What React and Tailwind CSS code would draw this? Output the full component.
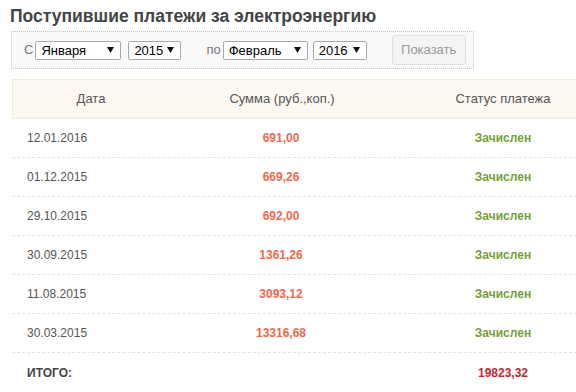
import React from 'react';

const payments = [
    { date: '12.01.2016', sum: '691,00' },
    { date: '01.12.2015', sum: '669,26' },
    { date: '29.10.2015', sum: '692,00' },
    { date: '30.09.2015', sum: '1361,26' },
    { date: '11.08.2015', sum: '3093,12' },
    { date: '30.03.2015', sum: '13316,68' },
];

const FakeSelect = ({ value, width }) => (
    <div className={`h-[19px] ${width} bg-white border border-[#a9a9a9] rounded-[2px] flex items-center justify-between pl-[5px] pr-[6px] text-[13px] text-black leading-none`}>
        <span>{value}</span>
        <svg width="7" height="6" viewBox="0 0 7 6"><path d="M0 0h7L3.5 6z" fill="#111" /></svg>
    </div>
);

export default function App() {
    return (
        <div className="w-[576px] h-[392px] overflow-hidden bg-white font-['Liberation_Sans',Arial,sans-serif]">
            <h1 className="pl-[10px] pt-[6px] text-[17.5px] leading-[20px] font-bold text-[#444]">
                Поступившие платежи за электроэнергию
            </h1>

            {/* Filter */}
            <div className="ml-[11px] mt-[5px] w-[463px] h-[38px] border border-dotted border-[#c8c8c8] bg-[#f9f9f9] flex items-center pl-[12px]">
                <span className="text-[13px] text-[#777] mr-[2px]">С</span>
                <FakeSelect value="Января" width="w-[86px]" />
                <div className="w-[7px]" />
                <FakeSelect value="2015" width="w-[53px]" />
                <span className="text-[13px] text-[#777] ml-[25px] mr-[2px]">по</span>
                <FakeSelect value="Февраль" width="w-[85px]" />
                <div className="w-[5px]" />
                <FakeSelect value="2016" width="w-[54px]" />
                <button className="ml-[25px] w-[74px] h-[30px] bg-[#f4f4f4] border border-[#e0e0e0] rounded-[3px] text-[13px] text-[#999]">
                    Показать
                </button>
            </div>

            {/* Table */}
            <div className="ml-[12px] mt-[10px] w-[600px] text-[12px]">
                <div className="h-[40px] flex items-center bg-[#fdf9f2] border border-[#f3ead8] text-[13px] text-[#555]">
                    <div className="w-[156px] text-center">Дата</div>
                    <div className="w-[226px] text-center">Сумма (руб.,коп.)</div>
                    <div className="flex-1 text-center">Статус платежа</div>
                </div>
                {payments.map((p) => (
                    <div key={p.date} className="h-[39px] flex items-center border-b border-dashed border-[#ebe2d4]">
                        <div className="w-[156px] pl-[15px] text-[#555]">{p.date}</div>
                        <div className="w-[226px] text-center font-bold text-[#f0694c]">{p.sum}</div>
                        <div className="flex-1 text-center font-bold text-[#76a03c]">Зачислен</div>
                    </div>
                ))}
                <div className="h-[39px] flex items-center">
                    <div className="w-[156px] pl-[15px] font-bold text-[#444]">ИТОГО:</div>
                    <div className="w-[226px]" />
                    <div className="flex-1 text-center font-bold text-[#c3272f]">19823,32</div>
                </div>
            </div>
        </div>
    );
}
